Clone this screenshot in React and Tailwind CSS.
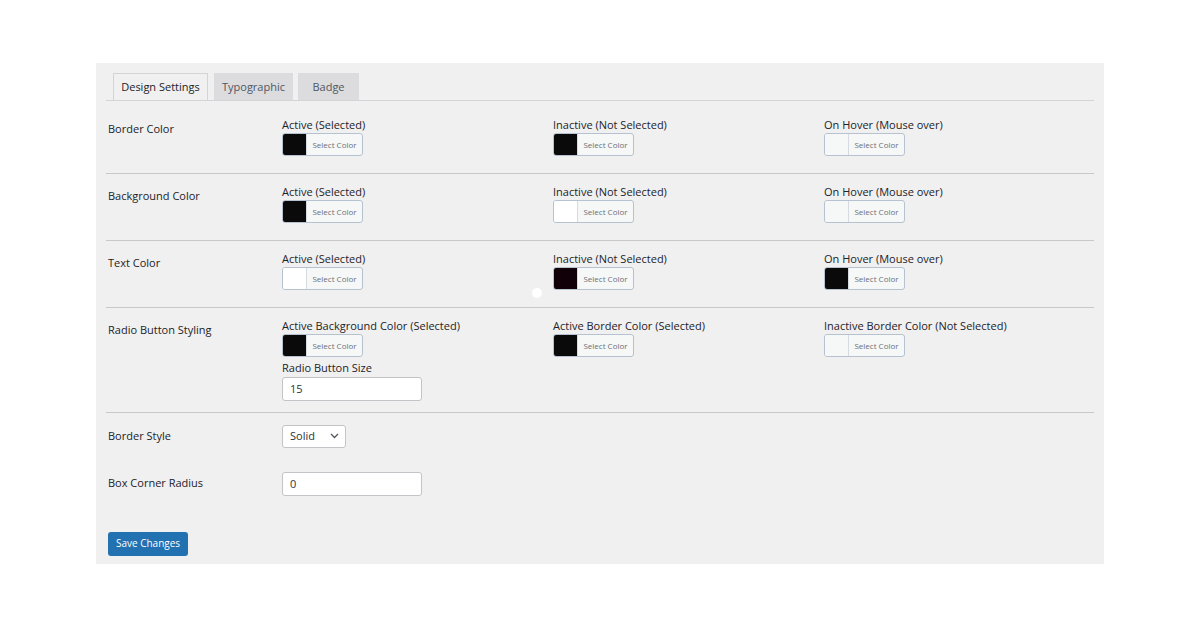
import React, { useState } from 'react'

const font = { fontFamily: '"Open Sans", "Noto Sans", sans-serif' }

function ColorPicker({ color }){
  return (
    <button className="flex h-[23px] w-[81px] overflow-hidden rounded-[3px] border border-[#b6c2cf] bg-[#f6f7f7]">
      <span className="h-full w-[24px] border-r border-[#d5dbe1]" style={{ background: color }} />
      <span className="flex flex-1 items-center justify-center text-[8px] text-[#6b7177]">Select Color</span>
    </button>
  )
}

function Field({ label, color, children }){
  return (
    <div className="w-[271px] shrink-0">
      <div className="text-[11px] font-medium leading-[16px] text-[#1d2327]">{label}</div>
      <ColorPicker color={color} />
      {children}
    </div>
  )
}

function Row({ title, fields, first, extra }){
  return (
    <div className={`flex border-b border-[#c9c9cc] ${first ? 'pt-[16px]' : 'pt-[10px]'} ${extra ? 'pb-[11px]' : 'pb-[17px]'}`}>
      <div className="w-[176px] shrink-0 pl-[2px] pt-[4px] text-[11px] font-medium leading-[16px] text-[#1d2327]">{title}</div>
      {fields.map((f, i) => (
        <Field key={i} label={f[0]} color={f[1]}>{i === 0 && extra}</Field>
      ))}
    </div>
  )
}

export default function App(){
  const [tab, setTab] = useState('Design Settings')
  const tabs = [['Design Settings', 'w-[95px]'], ['Typographic', 'ml-[6px] w-[79px]'], ['Badge', 'ml-[5px] w-[61px]']]
  const black = '#0a0a0a'
  const white = '#ffffff'

  return (
    <div className="relative min-h-[628px] w-[1200px] bg-white pt-[63px]" style={font}>
      <div className="ml-[96px] h-[501px] w-[1008px] bg-[#f0f0f1]">
        {/* tabs */}
        <div className="flex pl-[17px] pt-[10px]">
          {tabs.map(([t, w]) => (
            <button
              key={t}
              onClick={() => setTab(t)}
              className={`h-[27px] ${w} pt-[1px] text-[11px] font-medium ${t === tab ? 'relative z-10 -mb-px border border-b-0 border-[#d4d4d6] bg-[#f0f0f1] text-[#1d2327]' : 'bg-[#dcdcde] text-[#50575e]'}`}
            >{t}</button>
          ))}
        </div>
        <div className="mx-[10px] border-t border-[#d4d4d6]">
          <Row
            first
            title="Border Color"
            fields={[['Active (Selected)', black], ['Inactive (Not Selected)', black], ['On Hover (Mouse over)', '#f6f7f7']]}
          />
          <Row
            title="Background Color"
            fields={[['Active (Selected)', black], ['Inactive (Not Selected)', white], ['On Hover (Mouse over)', '#f6f7f7']]}
          />
          <Row
            title="Text Color"
            fields={[['Active (Selected)', white], ['Inactive (Not Selected)', '#120008'], ['On Hover (Mouse over)', black]]}
          />
          <Row
            title="Radio Button Styling"
            fields={[['Active Background Color (Selected)', black], ['Active Border Color (Selected)', black], ['Inactive Border Color (Not Selected)', '#f6f7f7']]}
            extra={
              <div className="pt-[4px]">
                <div className="text-[11px] font-medium leading-[14px] text-[#1d2327]">Radio Button Size</div>
                <input defaultValue="15" className="h-[24px] w-[140px] rounded-[3px] border border-[#c3c4c7] bg-white px-[7px] text-[11px] text-[#2c3338] outline-none" />
              </div>
            }
          />

          <div className="pt-[12px]">
            <div className="flex items-center">
              <div className="w-[176px] shrink-0 pl-[2px] text-[11px] font-medium text-[#1d2327]">Border Style</div>
              <div className="flex h-[23px] w-[64px] items-center justify-between rounded-[3px] border border-[#c3c4c7] bg-white pl-[7px] pr-[6px] text-[11px] text-[#2c3338]">
                <span>Solid</span>
                <svg width="9" height="6" viewBox="0 0 9 6" fill="none"><path d="M1 1l3.5 3.5L8 1" stroke="#50575e" strokeWidth="1.3" /></svg>
              </div>
            </div>
            <div className="mt-[24px] flex items-center">
              <div className="w-[176px] shrink-0 pl-[2px] text-[11px] font-medium text-[#1d2327]">Box Corner Radius</div>
              <input defaultValue="0" className="h-[24px] w-[140px] rounded-[3px] border border-[#c3c4c7] bg-white px-[7px] text-[11px] text-[#2c3338] outline-none" />
            </div>
            <button className="ml-[2px] mt-[36px] h-[24px] w-[80px] rounded-[3px] bg-[#2271b1] text-[10px] text-white">Save Changes</button>
          </div>
        </div>
      </div>
      {/* cursor dot */}
      <div className="absolute left-[532px] top-[288px] h-[10px] w-[10px] rounded-full bg-white" />
    </div>
  )
}
